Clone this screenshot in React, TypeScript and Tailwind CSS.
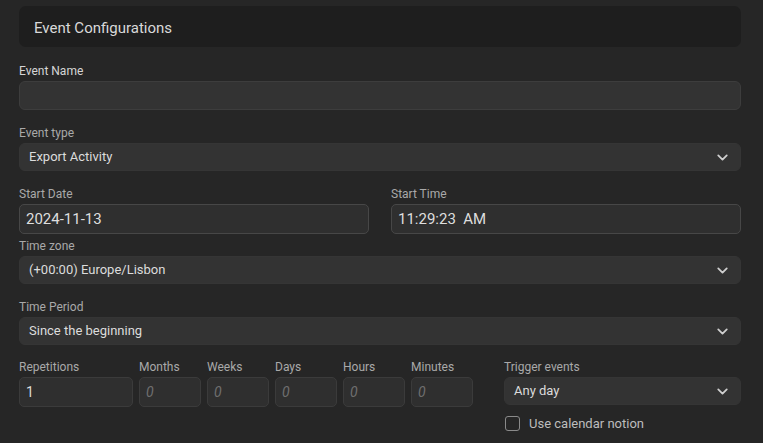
import React, { useState } from 'react'
import { ChevronDown } from 'lucide-react'

function Label({ children, bright }: { children: React.ReactNode; bright?: boolean }) {
  return (
    <div className={`text-[12px] leading-[17px] mb-[1px] ${bright ? 'text-[#d6d6d6]' : 'text-[#a9a9a9]'}`}>
      {children}
    </div>
  )
}

function Select({ value }: { value: string }) {
  return (
    <div className="h-[28px] w-full bg-[#333333] border border-[#353535] rounded-[6px] flex items-center justify-between pl-[9px] pr-[9px] text-[13px] text-[#dcdcdc]">
      <span>{value}</span>
      <ChevronDown size={17} strokeWidth={2.5} className="text-[#cfcfcf]" />
    </div>
  )
}

function NumBox({ label, value, wide }: { label: string; value?: string; wide?: boolean }) {
  return (
    <div className={`flex flex-col ${wide ? 'w-[114px]' : 'w-[62px]'}`}>
      <Label>{label}</Label>
      <div className="h-[30px] bg-[#2f2f2f] border border-[#3b3b3b] rounded-[5px] flex items-center px-[6px] text-[14px]">
        {value ? (
          <span className="text-[#dcdcdc]">{value}</span>
        ) : (
          <span className="italic text-[#6f6f6f]">0</span>
        )}
      </div>
    </div>
  )
}

export default function App() {
  const [calendar, setCalendar] = useState(false)

  return (
    <div className="w-[763px] h-[443px] bg-[#262626] overflow-hidden pl-[19px] pr-[22px] pt-[6px]" style={{ fontFamily: 'Roboto, "Liberation Sans", sans-serif' }}>
      {/* header */}
      <div className="h-[41px] bg-[#1e1e1e] rounded-[7px] flex items-center pl-[15px] pt-[3px] text-[15px] text-[#d9d9d9]">
        Event Configurations
      </div>

      <div className="mt-[16px]">
        <Label bright>Event Name</Label>
        <div className="h-[29px] bg-[#333333] border border-[#3d3d3d] rounded-[6px]" />
      </div>

      <div className="mt-[15px]">
        <Label>Event type</Label>
        <Select value="Export Activity" />
      </div>

      <div className="mt-[15px] flex gap-[22px]">
        <div className="flex-1">
          <Label>Start Date</Label>
          <div className="h-[30px] bg-[#2f2f2f] border border-[#474747] rounded-[5px] flex items-center px-[6px] text-[15px] text-[#dedede]">
            2024-11-13
          </div>
        </div>
        <div className="flex-1">
          <Label>Start Time</Label>
          <div className="h-[30px] bg-[#2f2f2f] border border-[#474747] rounded-[5px] flex items-center px-[6px] text-[15px] text-[#dedede]">
            11:29:23&nbsp; AM
          </div>
        </div>
      </div>

      <div className="mt-[4px]">
        <Label>Time zone</Label>
        <Select value="(+00:00) Europe/Lisbon" />
      </div>

      <div className="mt-[15px]">
        <Label>Time Period</Label>
        <Select value="Since the beginning" />
      </div>

      <div className="mt-[14px] flex">
        <div className="flex gap-[6px]">
          <NumBox label="Repetitions" value="1" wide />
          <NumBox label="Months" />
          <NumBox label="Weeks" />
          <NumBox label="Days" />
          <NumBox label="Hours" />
          <NumBox label="Minutes" />
        </div>
        <div className="ml-auto w-[237px] flex flex-col">
          <Label>Trigger events</Label>
          <Select value="Any day" />
          <label className="mt-[9px] flex items-center gap-[9px] cursor-pointer">
            <input
              type="checkbox"
              checked={calendar}
              onChange={() => setCalendar(!calendar)}
              className="appearance-none w-[15px] h-[15px] border border-[#8a8a8a] rounded-[3px] bg-transparent ml-px"
            />
            <span className="text-[13px] text-[#bdbdbd]">Use calendar notion</span>
          </label>
        </div>
      </div>
    </div>
  )
}
